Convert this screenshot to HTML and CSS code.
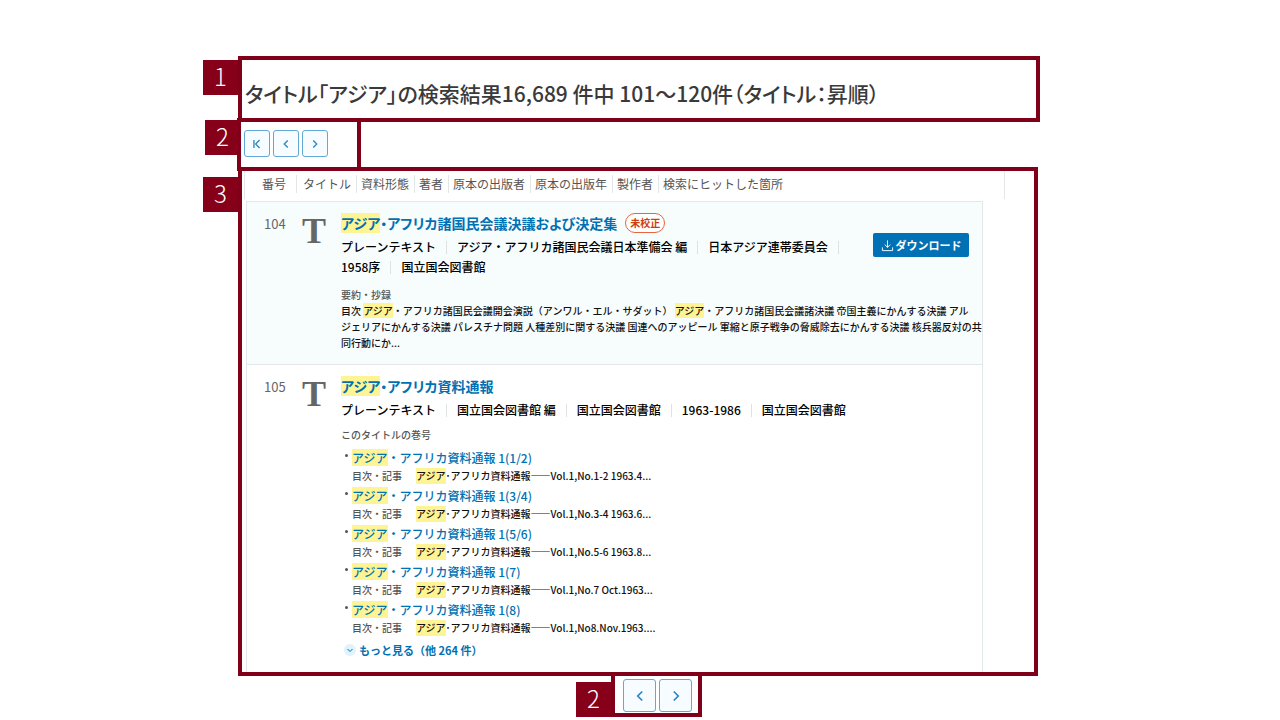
FILE: index.html
```html
<!DOCTYPE html>
<html lang="ja">
<head>
<meta charset="utf-8">
<meta name="viewport" content="width=device-width, initial-scale=1">
<title>検索結果</title>
<link rel="stylesheet" href="styles.css">
</head>
<body>
<main class="guide">
  <section class="row">
    <span class="mark">1</span>
    <div class="frame frame-title">
      <h1 class="heading">タイトル「アジア」の検索結果16,689 件中 101～120件（タイトル：昇順）</h1>
    </div>
  </section>

  <section class="row row-pager">
    <span class="mark">2</span>
    <nav class="frame pager" aria-label="ページ送り（上）">
      <button class="page-btn" type="button" aria-label="最初のページ"><svg viewBox="0 0 16 16"><path d="M4.500 3.500v9M11 3.500L6.500 8l4.500 4.500"/></svg></button>
      <button class="page-btn" type="button" aria-label="前のページ"><svg viewBox="0 0 16 16"><path d="M10 4L6 8l4 4"/></svg></button>
      <button class="page-btn" type="button" aria-label="次のページ"><svg viewBox="0 0 16 16"><path d="M6 4l4 4-4 4"/></svg></button>
    </nav>
  </section>

  <section class="row row-results">
    <span class="mark">3</span>
    <div class="frame frame-results">
      <ul class="columns">
        <li>番号</li><li>タイトル</li><li>資料形態</li><li>著者</li><li>原本の出版者</li><li>原本の出版年</li><li>製作者</li><li>検索にヒットした箇所</li>
      </ul>
      <div class="list">
        <article class="item item-tint">
          <span class="num">104</span>
          <span class="type">T</span>
          <div class="body">
            <div class="top">
              <div class="info">
                <h2 class="title"><a href="#"><mark>アジア</mark>・アフリカ諸国民会議決議および決定集</a><span class="tag">未校正</span></h2>
                <ul class="meta">
                  <li>プレーンテキスト</li><li>アジア・アフリカ諸国民会議日本準備会 編</li><li>日本アジア連帯委員会</li><li>1958序</li><li>国立国会図書館</li>
                </ul>
              </div>
              <button class="download" type="button"><svg viewBox="0 0 14 14"><path d="M7 1.500v7.500M4 6l3 3 3-3M1.500 9v3.500h11V9"/></svg>ダウンロード</button>
            </div>
            <h3 class="label">要約・抄録</h3>
            <p class="summary">目次 <mark>アジア</mark>・アフリカ諸国民会議開会演説（アンワル・エル・サダット） <mark>アジア</mark>・アフリカ諸国民会議諸決議 帝国主義にかんする決議 アル<br>ジェリアにかんする決議 パレスチナ問題 人種差別に関する決議 国連へのアッピール 軍縮と原子戦争の脅威除去にかんする決議 核兵器反対の共<br>同行動にか...</p>
          </div>
        </article>

        <article class="item">
          <span class="num">105</span>
          <span class="type">T</span>
          <div class="body">
            <h2 class="title"><a href="#"><mark>アジア</mark>・アフリカ資料通報</a></h2>
            <ul class="meta">
              <li>プレーンテキスト</li><li>国立国会図書館 編</li><li>国立国会図書館</li><li>1963-1986</li><li>国立国会図書館</li>
            </ul>
            <h3 class="label label-volumes">このタイトルの巻号</h3>
            <ul class="volumes">
              <li><a href="#"><mark>アジア</mark>・アフリカ資料通報 1(1/2)</a><p class="hit"><span>目次・記事</span><mark>アジア</mark>･アフリカ資料通報――Vol.1,No.1-2 1963.4...</p></li>
              <li><a href="#"><mark>アジア</mark>・アフリカ資料通報 1(3/4)</a><p class="hit"><span>目次・記事</span><mark>アジア</mark>･アフリカ資料通報――Vol.1,No.3-4 1963.6...</p></li>
              <li><a href="#"><mark>アジア</mark>・アフリカ資料通報 1(5/6)</a><p class="hit"><span>目次・記事</span><mark>アジア</mark>･アフリカ資料通報――Vol.1,No.5-6 1963.8...</p></li>
              <li><a href="#"><mark>アジア</mark>・アフリカ資料通報 1(7)</a><p class="hit"><span>目次・記事</span><mark>アジア</mark>･アフリカ資料通報――Vol.1,No.7 Oct.1963...</p></li>
              <li><a href="#"><mark>アジア</mark>・アフリカ資料通報 1(8)</a><p class="hit"><span>目次・記事</span><mark>アジア</mark>･アフリカ資料通報――Vol.1,No8.Nov.1963....</p></li>
            </ul>
            <button class="more" type="button"><svg viewBox="0 0 12 12"><circle cx="6" cy="6" r="6"/><path d="M3.500 5L6 7.500 8.500 5"/></svg>もっと見る（他 264 件）</button>
          </div>
        </article>
      </div>
    </div>
  </section>

  <section class="row row-bottom">
    <span class="mark">2</span>
    <nav class="frame pager pager-large" aria-label="ページ送り（下）">
      <button class="page-btn" type="button" aria-label="前のページ"><svg viewBox="0 0 16 16"><path d="M10 4L6 8l4 4"/></svg></button>
      <button class="page-btn" type="button" aria-label="次のページ"><svg viewBox="0 0 16 16"><path d="M6 4l4 4-4 4"/></svg></button>
    </nav>
  </section>
</main>
</body>
</html>
```
FILE: styles.css
```css
* { box-sizing: border-box; }
body {
  margin: 0;
  background: #fff;
  color: #111;
  font-family: "Noto Sans CJK JP", sans-serif;
  font-weight: 500;
}
h1, h2, h3, p, ul { margin: 0; padding: 0; }
ul { list-style: none; }
a { color: #0071b2; text-decoration: none; }
button { font-family: inherit; cursor: pointer; }
svg { fill: none; stroke: currentColor; flex: none; }
mark { background: #fff494; color: inherit; }

.guide { padding: 56px 240px 3px 203px; }
.row { display: flex; align-items: flex-start; }
.mark {
  flex: none;
  width: 35px;
  height: 35px;
  margin-top: 4px;
  background: #870019;
  color: #fff;
  font-size: 24px;
  line-height: 31px;
  font-weight: 300;
  text-align: center;
}
.frame { border: 4px solid #800019; min-width: 0; }
.frame-title { flex: 1; padding: 18px 3px 10px; }
.heading {
  color: #3a3a3a;
  font-size: 21px;
  line-height: 30px;
  font-weight: 500;
  font-feature-settings: "palt";
}

.row-pager { margin-top: -4px; padding-left: 2px; }
.row-pager .mark { margin-top: 2px; }
.row-pager .frame { width: 124px; margin-left: -3px; }
.pager { display: flex; gap: 3px; padding: 8px 3px 10px; }
.page-btn {
  display: grid;
  place-items: center;
  width: 26px;
  height: 27px;
  padding: 0;
  border: 1px solid #62a9d5;
  border-radius: 3px;
  background: #f6fcff;
  color: #2a86c4;
}
.page-btn svg { width: 14px; height: 14px; stroke-width: 1.5; }

.row-results { margin-top: -4px; margin-right: 2px; }
.row-results .mark { margin-top: 10px; }
.frame-results { flex: 1; padding-left: 2px; }
.columns {
  display: flex;
  height: 28px;
  margin-right: 29px;
  padding: 4px 0 6px 17px;
  border: solid #e6e6e6;
  border-width: 0 1px;
  color: #555;
  font-size: 12px;
  line-height: 18px;
  font-weight: 400;
  white-space: nowrap;
}
.columns li + li { margin-left: 5px; padding-left: 4px; border-left: 1px solid #e3e6e6; }
.columns li:nth-child(2) { margin-left: 10px; padding-left: 6px; }

.list { margin: 2px 51px 0 2px; border: solid #e3e8e8; border-width: 1px 1px 0; }
.item { display: flex; padding: 11px 13px 12px 17px; }
.item-tint { padding-bottom: 13px; background: #f7fcfd; border-bottom: 1px solid #e3e8e8; }
.num { flex: none; width: 38px; color: #666; font-size: 13px; line-height: 22px; font-weight: 400; }
.type {
  flex: none;
  width: 39px;
  color: #666;
  font-family: "Liberation Serif", serif;
  font-size: 36px;
  line-height: 36px;
  font-weight: 700;
}
.body { flex: 1; min-width: 0; }
.top { display: flex; align-items: center; }
.info { flex: 1; min-width: 0; }
.title { display: flex; gap: 8px; font-size: 14px; line-height: 20px; font-weight: 700; font-feature-settings: "palt"; }
.tag {
  padding: 0 4px;
  border: 1px solid #e5663e;
  border-radius: 10px;
  background: #fff;
  color: #cc3d10;
  font-size: 10px;
  line-height: 17px;
}
.meta { display: flex; flex-wrap: wrap; padding-top: 4px; font-size: 12px; line-height: 20px; color: #000; }
.meta li { display: flex; align-items: center; }
.meta li:not(:last-child)::after { content: ""; width: 1px; height: 13px; margin: 0 10px; background: #dde3e3; }
.download {
  display: flex;
  align-items: center;
  justify-content: center;
  gap: 2px;
  width: 96px;
  height: 24px;
  padding: 0;
  border: 0;
  border-radius: 2px;
  background: #0071b5;
  color: #fff;
  font-size: 11px;
  font-weight: 700;
}
.download svg { width: 13px; height: 13px; }
.label { margin-top: 10px; color: #555; font-size: 10px; line-height: 16px; font-weight: 500; }
.label-volumes { margin-top: 7px; }
.summary { font-size: 10px; line-height: 16px; white-space: nowrap; }

.volumes { margin-top: 5px; padding-left: 11px; }
.volumes li { position: relative; padding-bottom: 2px; font-size: 12px; line-height: 20px; }
.volumes li::before {
  content: "";
  position: absolute;
  left: -7px;
  top: 6px;
  width: 3px;
  height: 3px;
  border-radius: 50%;
  background: #555;
}
.hit { display: flex; font-size: 10px; line-height: 16px; white-space: pre; color: #111; }
.hit span { width: 64px; color: #555; }
.more {
  display: flex;
  align-items: center;
  gap: 3px;
  margin: 2px 0 0 3px;
  padding: 0;
  border: 0;
  background: none;
  color: #0071b2;
  font-size: 11px;
  line-height: 20px;
  font-weight: 700;
}
.more svg { width: 12px; height: 12px; }
.more circle { fill: #e0f2fb; stroke: none; }

.row-bottom { margin-top: -4px; padding-left: 373px; }
.row-bottom .mark { margin-top: 10px; }
.pager-large { gap: 3px; padding: 3px 6px 1px 8px; }
.pager-large .page-btn { width: 33px; height: 33px; }
.pager-large svg { width: 18px; height: 18px; }
```
